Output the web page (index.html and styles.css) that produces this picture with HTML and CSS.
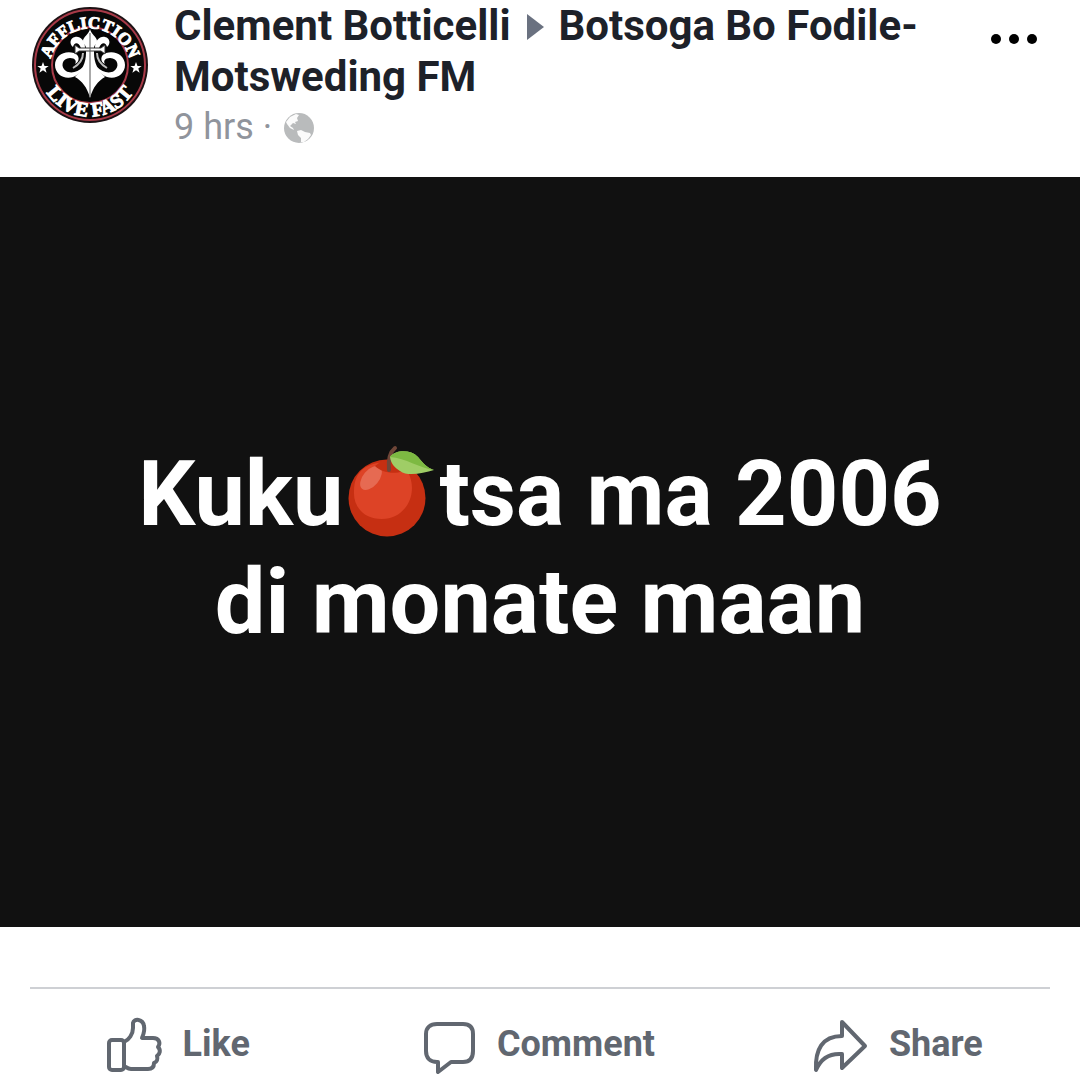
FILE: index.html
```html
<!DOCTYPE html>
<html lang="tn">
<head>
    <meta charset="UTF-8">
    <meta name="viewport" content="width=device-width, initial-scale=1">
    <title>Clement Botticelli</title>
    <link rel="stylesheet" href="styles.css">
</head>
<body>
    <article class="post">
        <!-- Post header -->
        <header class="post-header">
            <a class="avatar" href="#" aria-label="Clement Botticelli">
                <svg viewBox="0 0 116 116">
                    <defs>
                        <path id="arcTop" d="M17.500 62 A40.500 40.500 0 1 1 98.500 62"/>
                        <path id="arcBottom" d="M6.500 58 A51.500 51.500 0 0 0 109.500 58"/>
                    </defs>
                    <circle cx="58" cy="58" r="58" fill="#1c1114"/>
                    <circle cx="58" cy="58" r="55" fill="#080808" stroke="#a83a48" stroke-width="2"/>
                    <circle cx="58" cy="58" r="38" fill="#050505" stroke="#a83a48" stroke-width="2"/>
                    <text class="badge-text"><textPath href="#arcTop" startOffset="50%">AFFLICTION</textPath></text>
                    <text class="badge-text badge-text-bottom"><textPath href="#arcBottom" startOffset="50%">LIVE FAST</textPath></text>
                    <g fill="#fff">
                        <path id="star" d="M11 55l1.500 4h4.200l-3.400 2.600 1.300 4.200-3.600-2.500-3.600 2.500 1.300-4.200-3.400-2.600h4.200z"/>
                        <use href="#star" x="93"/>
                        <path d="M58 22C57 27 51 30 51 34C51 37 54 38 54 41V46C54 56 50 63 43 70C50 74 55 80 58 91C61 80 66 74 73 70C66 63 62 56 62 46V41C62 38 65 37 65 34C65 30 59 27 58 22Z"/>
                        <path id="curl" d="M42 46C32 43 23 49 23 58C23 67 32 73 41 70C46 68 50 64 51 60C46 65 39 67 34 64C28 60 30 51 38 51C43 51 45 54 43 57C48 55 48 48 42 46Z"/>
                        <path id="smallCurl" d="M53 41C53 33 48 29 43 30C38 31 37 37 41 40C42 36 46 34 49 41Z"/>
                        <use href="#curl" transform="matrix(-1 0 0 1 116 0)"/>
                        <use href="#smallCurl" transform="matrix(-1 0 0 1 116 0)"/>
                        <path d="M43 38L47 41H69L73 38V47L69 44H47L43 47Z" stroke="#333" stroke-width="1"/>
                    </g>
                    <path d="M58 26V89" fill="none" stroke="#555" stroke-width="1"/>
                    <path d="M51 46C51 53 48 57 41 61M65 46C65 53 68 57 75 61" fill="none" stroke="#bbb" stroke-width="2"/>
                </svg>
            </a>
            <div class="post-info">
                <h1 class="post-title">
                    <a href="#">Clement Botticelli</a>
                    <svg class="arrow" viewBox="0 0 18 26"><path d="M1 0L18 13L1 26Z" fill="#6a7180"/></svg>
                    <a href="#">Botsoga Bo Fodile-Motsweding FM</a>
                </h1>
                <div class="post-meta">
                    <span>9 hrs ·</span>
                    <svg class="globe" viewBox="0 0 30 30">
                        <circle cx="15" cy="15" r="15" fill="#b9bbbc"/>
                        <path d="M6 4L12 1L15 2L13 5L14 8L11 9L12 11L9 10L6 13L9 15L10 17L6 15L3 11L2 9ZM13 18L17 17L21 19L26 20L27 22L24 26L20 29L17 29L17 25L14 22Z" fill="#fbfbfb"/>
                    </svg>
                </div>
            </div>
            <button class="more-btn" type="button" aria-label="More">
                <svg viewBox="0 0 46 10"><circle cx="5" cy="5" r="5"/><circle cx="23" cy="5" r="5"/><circle cx="41" cy="5" r="5"/></svg>
            </button>
        </header>

        <!-- Post text -->
        <div class="post-body">
            <p class="post-text">Kuku<svg class="apple" viewBox="0 0 90 92" role="img" aria-label="apple">
                <circle cx="40" cy="52" r="38.500" fill="#c62f12"/>
                <path d="M16 23C27 14 54 13 61 26C72 47 59 73 35 73C16 73 6 60 7 45C7 35 10 28 16 23Z" fill="#dd4326"/>
                <ellipse cx="24" cy="32" rx="8" ry="14" fill="#e66a52" transform="rotate(40 24 32)"/>
                <path d="M28 20C34 26 46 29 56 25L48 16L36 14Z" fill="#c62f12"/>
                <path d="M42 24C41 14 43 6 48 2" fill="none" stroke="#704638" stroke-width="4" stroke-linecap="round"/>
                <path d="M43 11C48 4 63 3 71 11C76 17 80 22 87 24C76 27 61 31 53 25C48 22 44 18 43 11Z" fill="#9fcd66"/>
                <path d="M43 11C48 4 63 3 71 11C76 17 80 22 87 24C72 22 59 12 43 11Z" fill="#7db942"/>
            </svg>tsa ma 2006 di monate maan</p>
        </div>

        <!-- Actions -->
        <footer class="post-actions">
            <button class="action-btn" type="button">
                <svg class="action-icon" viewBox="0 0 54 58">
                    <rect x="2" y="25" width="15" height="30" rx="3"/>
                    <path d="M17 27C22 25 26 19 26 13V8C27 3 36 4 37 11C38 16 37 18 35 23H46C52 23 54 28 51 32C54 35 53 39 50 41C51 44 50 47 47 48C47 53 44 54 41 54H24C21 54 19 52 17 51"/>
                </svg>
                Like
            </button>
            <button class="action-btn" type="button">
                <svg class="action-icon" viewBox="0 0 54 58">
                    <path d="M16 9H42C49 9 52 13 52 19V36C52 43 49 47 42 47H30L17 57V47H16C9 47 5 43 5 36V19C5 13 9 9 16 9Z"/>
                </svg>
                Comment
            </button>
            <button class="action-btn" type="button">
                <svg class="action-icon" viewBox="0 0 54 58">
                    <path d="M29 7L52 31L29 53V39C16 38 8 43 3 55C2 35 9 21 29 21Z"/>
                </svg>
                Share
            </button>
        </footer>
    </article>
</body>
</html>
```

FILE: styles.css
```css
* {
    box-sizing: border-box;
}

body {
    margin: 0;
    background: #fff;
    font-family: Roboto, "Liberation Sans", sans-serif;
}

a {
    color: inherit;
    text-decoration: none;
}

button {
    padding: 0;
    border: none;
    background: none;
    font-family: inherit;
    cursor: pointer;
}

svg {
    overflow: visible;
}

/* Header */
.post-header {
    display: flex;
    align-items: flex-start;
    padding: 0 43px 24px 32px;
}

.avatar {
    flex: none;
    width: 116px;
    margin: 7px 26px 0 0;
}

.avatar svg {
    display: block;
}

.badge-text {
    font-family: "Liberation Serif", serif;
    font-size: 17px;
    font-weight: bold;
    fill: #fff;
    stroke: #fff;
    stroke-width: 1px;
    text-anchor: middle;
}

.badge-text-bottom {
    font-size: 20px;
}

.post-info {
    flex: 1;
}

.post-title {
    margin: 0;
    font-size: 42px;
    font-weight: 700;
    line-height: 51px;
    color: #1d2129;
}

.arrow {
    width: 18px;
    height: 26px;
    margin: 0 4px 0 5px;
}

.post-meta {
    display: flex;
    align-items: center;
    gap: 12px;
    font-size: 36px;
    line-height: 51px;
    color: #90949c;
}

.globe {
    width: 30px;
    height: 30px;
}

.more-btn {
    width: 46px;
    margin-top: 34px;
}

.more-btn svg {
    display: block;
}

/* Body */
.post-body {
    display: flex;
    align-items: center;
    justify-content: center;
    min-height: 750px;
    padding: 60px 60px 66px;
    background: #111;
}

.post-text {
    max-width: 860px;
    margin: 0;
    font-size: 90px;
    font-weight: 700;
    line-height: 108px;
    text-align: center;
    color: #fff;
}

.apple {
    width: 90px;
    height: 92px;
    margin: 0 2px 0 4px;
    vertical-align: -13px;
}

/* Actions */
.post-actions {
    display: grid;
    grid-template-columns: 7fr 10fr 7fr;
    margin: 60px 30px 0;
    padding: 26px 4px 6px 0;
    border-top: 2px solid #ced0d4;
}

.action-btn {
    display: flex;
    align-items: center;
    justify-content: center;
    gap: 22px;
    font-size: 36px;
    font-weight: 700;
    color: #616770;
}

.action-icon {
    width: 54px;
    height: 58px;
    fill: none;
    stroke: #616770;
    stroke-width: 4;
    stroke-linejoin: round;
    stroke-linecap: round;
}
```
